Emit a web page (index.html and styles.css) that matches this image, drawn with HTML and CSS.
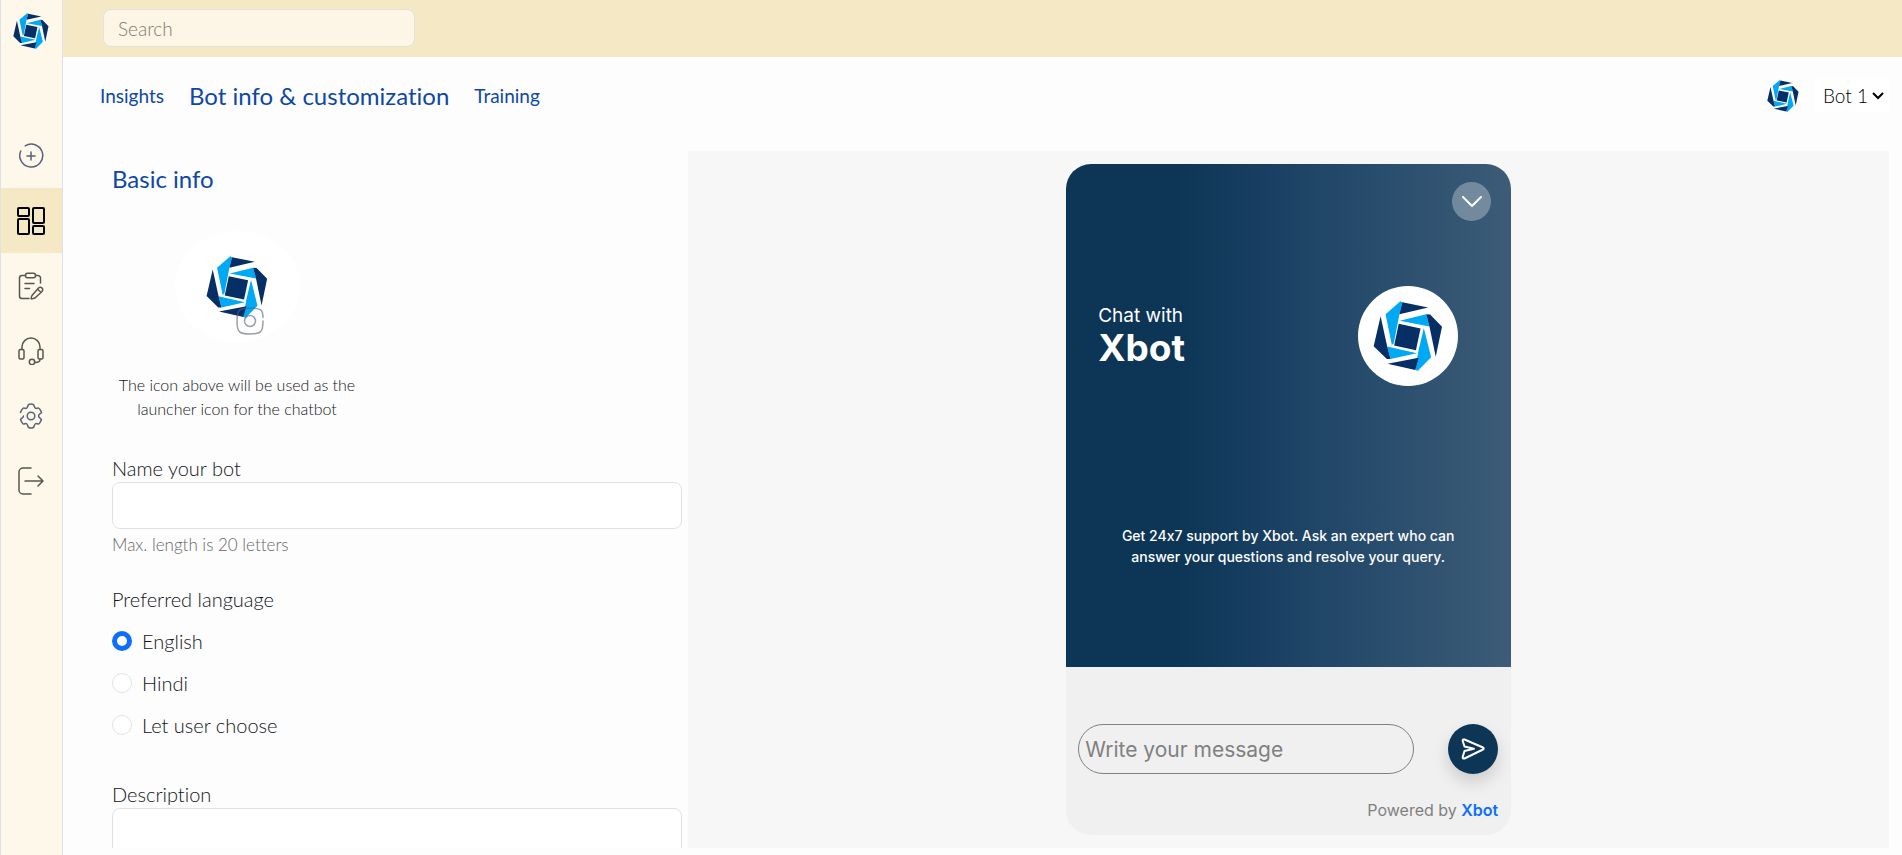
FILE: index.html
```html
<!DOCTYPE html>
<html lang="en">
<head>
    <meta charset="UTF-8">
    <meta name="viewport" content="width=device-width, initial-scale=1.0">
    <title>Bot info & customization</title>
    <link rel="stylesheet" href="styles.css">
</head>
<body>
    <!-- shared logo -->
    <svg class="defs" width="0" height="0" aria-hidden="true">
        <symbol id="logo" viewBox="68 62 210 212">
            <g fill="#00a9f4">
                <path d="M150 63l6 3-9 36-17 88-6 5-19-93z"/>
                <path d="M148 122l80-20 10 37z"/>
                <path d="M221 144l22 88-40 41-8-2 10-60z"/>
                <path d="M110 200l90 20-80 18z"/>
            </g>
            <g fill="#062f66">
                <path d="M156 66l78 16-87 20z"/>
                <path d="M228 102l12 1 36 37-19 91-19-92z"/>
                <path d="M205 234l-10 37-84-19z"/>
                <path d="M90 108l20 92 10 38-11 0-40-39z"/>
                <path d="M145 131l66 14-14 66-66-14z"/>
            </g>
        </symbol>
    </svg>

    <div class="app">
        <nav class="sidebar" aria-label="Main">
            <a class="brand" href="#" aria-label="Home"><svg><use href="#logo"/></svg></a>
            <ul class="menu">
                <li><a href="#" aria-label="New bot">
                    <svg class="blue" viewBox="0 0 28 28"><path d="M8.200 3.800A11.500 11.500 0 1 1 3.700 9M14 10v8M10 14h8"/></svg>
                </a></li>
                <li><a href="#" class="active" aria-label="Dashboard">
                    <svg viewBox="0 0 28 28"><rect x="1" y="1" width="11" height="8" rx="1"/><rect x="1" y="12" width="11" height="15" rx="1"/><rect x="16" y="1" width="11" height="15" rx="1"/><rect x="16" y="19" width="11" height="8" rx="1"/></svg>
                </a></li>
                <li><a href="#" aria-label="Forms">
                    <svg viewBox="0 0 28 28"><path d="M8.500 3.500H5a2.500 2.500 0 0 0-2.500 2.500v18A2.500 2.500 0 0 0 5 26.500h7M18.500 3.500h2.500a2.500 2.500 0 0 1 2.500 2.500v5M8 11.500h9M8 16.500h4.500M15 23.500l6.500-7.500q2-1.500 3.500 0t0 3.500l-7 6.500q-4 1.500-3.800.500 0-1.500.800-3zM20.500 17.300l3.500 3"/><rect x="8.500" y="1.300" width="10" height="4.500" rx="2"/></svg>
                </a></li>
                <li><a href="#" aria-label="Support">
                    <svg viewBox="0 0 28 28"><path d="M5 12.500V10a9 9 0 0 1 18 0v2.500M23 22.500c0 2.300-2 3-5 3"/><rect x="2" y="12.500" width="5" height="9.500" rx="1.500"/><rect x="21" y="12.500" width="5" height="9.500" rx="1.500"/><circle cx="15" cy="25" r="2.700"/></svg>
                </a></li>
                <li><a href="#" aria-label="Settings">
                    <svg class="blue" viewBox="0 0 28 28"><path d="M3.500 10.500c1-2.500 2.500-5 3.500-4.500 2.500 1 3 .500 4-2.500.300-1.500 1-1.500 3-1.500s2.700 0 3 1.500c1 3 1.500 3.500 4 2.500 1-.500 2.500 2 3.500 4.500 0 .700-3 1.700-3 3.500s3 2.800 3 3.500c-1 2.500-2.500 5-3.500 4.500-2.500-1-3-.500-4 2.500-.300 1.500-1 1.500-3 1.500s-2.700 0-3-1.500c-1-3-1.500-3.500-4-2.500-1 .500-2.500-2-3.500-4.500 0-.700 3-1.700 3-3.500"/><circle cx="14" cy="14" r="3.800"/></svg>
                </a></li>
                <li><a href="#" aria-label="Log out">
                    <svg viewBox="0 0 28 28"><path d="M14 1H6a4 4 0 0 0-4 4v18a4 4 0 0 0 4 4h8M8 14h18M21 9l5 5-5 5"/></svg>
                </a></li>
            </ul>
        </nav>

        <div class="main">
            <header class="topbar">
                <input class="search" type="search" placeholder="Search" aria-label="Search">
            </header>

            <div class="tabs-row">
                <nav class="tabs" aria-label="Bot sections">
                    <a href="#">Insights</a>
                    <a href="#" class="current">Bot info &amp; customization</a>
                    <a href="#">Training</a>
                </nav>
                <div class="bot-picker">
                    <svg class="picker-logo"><use href="#logo"/></svg>
                    <div class="picker-select">
                        <select aria-label="Bot">
                            <option>Bot 1</option>
                        </select>
                        <svg class="arrow" viewBox="0 0 12 8"><path d="M1 1l5 5 5-5"/></svg>
                    </div>
                </div>
            </div>

            <div class="content">
                <form class="bot-form">
                    <h2>Basic info</h2>
                    <div class="icon-block">
                        <div class="bot-icon">
                            <svg class="bot-logo"><use href="#logo"/></svg>
                            <button class="camera" type="button" aria-label="Change icon">
                                <svg viewBox="0 0 28 28"><path d="M27 10.500C27 3 25 1 14 1S1 3 1 14s2 13 13 13 13-2 13-13"/><circle cx="14" cy="14" r="5.500"/></svg>
                            </button>
                        </div>
                        <p>The icon above will be used as the launcher icon for the chatbot</p>
                    </div>

                    <div class="field">
                        <label for="bot-name">Name your bot</label>
                        <input type="text" id="bot-name" maxlength="20">
                        <small>Max. length is 20 letters</small>
                    </div>

                    <fieldset class="languages">
                        <legend>Preferred language</legend>
                        <label><input type="radio" name="lang" checked>English</label>
                        <label><input type="radio" name="lang">Hindi</label>
                        <label><input type="radio" name="lang">Let user choose</label>
                    </fieldset>

                    <div class="field">
                        <label for="description">Description</label>
                        <textarea id="description"></textarea>
                    </div>
                </form>

                <section class="preview" aria-label="Preview">
                    <div class="chat">
                        <div class="chat-top">
                            <button class="collapse" type="button" aria-label="Collapse">
                                <svg viewBox="0 0 20 12"><path d="M1 1l9 9 9-9"/></svg>
                            </button>
                            <div class="chat-title">
                                <p>Chat with<strong>Xbot</strong></p>
                                <div class="chat-logo"><svg><use href="#logo"/></svg></div>
                            </div>
                            <p class="chat-text">Get 24x7 support by Xbot. Ask an expert who can answer your questions and resolve your query.</p>
                        </div>
                        <div class="chat-bottom">
                            <div class="message-row">
                                <input type="text" placeholder="Write your message" aria-label="Message">
                                <button class="send" type="button" aria-label="Send">
                                    <svg viewBox="0 0 24 22"><path d="M3.500 1.500L22 9.500q1.500 1 0 2L3.500 20.500q-2 .500-1.800-1.500L3.500 13l9.500-2.300L3.500 8.500 1.700 3q-.200-2 1.800-1.500z"/></svg>
                                </button>
                            </div>
                            <p class="powered">Powered by <a href="#">Xbot</a></p>
                        </div>
                    </div>
                </section>
            </div>
        </div>
    </div>
</body>
</html>
```
FILE: styles.css
```css
* {
    box-sizing: border-box;
}

body {
    margin: 0;
    font-family: Lato, sans-serif;
    font-size: 20px;
    font-weight: 300;
    font-variant-ligatures: none;
    color: #111518;
    background-color: #fdfdfd;
}

p, h2, ul {
    margin: 0;
    padding: 0;
}

a {
    text-decoration: none;
}

button {
    border: none;
    padding: 0;
    cursor: pointer;
}

input, select, textarea {
    font: inherit;
    color: inherit;
}

.defs {
    position: absolute;
}

.app {
    display: flex;
    height: 100vh;
    overflow: hidden;
}

/* sidebar */
.sidebar {
    width: 63px;
    flex-shrink: 0;
    background-color: #fdf8ea;
    border-left: 1px solid #dee2e6;
    border-right: 1px solid #dee2e6;
}

.brand {
    display: flex;
    justify-content: center;
    height: 123px;
    padding: 13px 2px 0 0;
}

.brand svg {
    width: 36px;
    height: 36px;
}

.menu {
    list-style: none;
}

.menu a {
    display: flex;
    align-items: center;
    justify-content: center;
    height: 65px;
    padding-right: 1px;
}

.menu a.active {
    background-color: #f5e8c5;
}

.menu svg {
    width: 28px;
    height: 28px;
    fill: none;
    stroke: #57564f;
    stroke-width: 1.5;
    stroke-linecap: round;
    stroke-linejoin: round;
}

.menu svg.blue {
    stroke: #59617b;
}

.menu .active svg {
    stroke: #000;
    stroke-width: 2;
}

/* top part */
.main {
    flex: 1;
    min-width: 0;
    display: flex;
    flex-direction: column;
}

.topbar {
    flex-shrink: 0;
    height: 57px;
    padding: 9px 40px;
    background-color: #f5e8c5;
}

.search {
    display: block;
    width: 312px;
    height: 38px;
    padding: 0 14px;
    border: 1px solid #e3e1da;
    border-radius: 8px;
    background-color: #fdf5e6;
    font-size: 19px;
}

.search::placeholder {
    color: #7e7d70;
    opacity: 1;
}

.tabs-row {
    display: flex;
    flex-shrink: 0;
    justify-content: space-between;
    align-items: center;
    height: 77px;
    margin-bottom: 17px;
    padding: 0 13px 0 37px;
}

.tabs {
    display: flex;
    align-items: center;
    gap: 25px;
}

.tabs a {
    color: #0d47a9;
    font-size: 19px;
    font-weight: 400;
}

.tabs a.current {
    font-size: 24px;
}

.bot-picker {
    display: flex;
    align-items: center;
    gap: 16px;
}

.picker-logo {
    width: 32px;
    height: 32px;
}

.picker-select {
    position: relative;
}

.picker-select select {
    appearance: none;
    display: block;
    width: 74px;
    height: 33px;
    padding: 0 8px;
    border: none;
    background-color: #fff;
    color: #000;
    font-size: 19px;
}

.picker-select .arrow {
    position: absolute;
    top: 13px;
    right: 5px;
    width: 12px;
    height: 8px;
    fill: none;
    stroke: #000;
    stroke-width: 2;
    pointer-events: none;
}

/* form */
.content {
    flex: 1;
    min-height: 0;
    display: grid;
    grid-template-columns: 1fr 2fr;
    margin: 0 13px 7px 25px;
}

.bot-form {
    padding: 12px 6px 0 24px;
    overflow-y: auto;
    scrollbar-width: none;
}

.bot-form h2 {
    color: #0d47a9;
    font-size: 24px;
    font-weight: 400;
    line-height: 32px;
}

.icon-block {
    width: 250px;
    margin: 36px 0 33px;
    text-align: center;
    font-size: 16px;
    line-height: 24px;
}

.bot-icon {
    position: relative;
    display: flex;
    align-items: center;
    justify-content: center;
    width: 125px;
    height: 111px;
    margin: 0 auto 31px;
    border-radius: 50%;
    background-color: #fff;
}

.bot-logo {
    width: 62px;
    height: 62px;
}

.camera {
    position: absolute;
    left: 61px;
    bottom: 7px;
    width: 28px;
    height: 28px;
    background: none;
}

.camera svg {
    display: block;
    fill: none;
    stroke: #59617b;
    stroke-width: 1.5;
    stroke-linecap: round;
    opacity: 0.6;
}

.field label {
    display: block;
    line-height: 28px;
}

.field input, .field textarea {
    display: block;
    width: 100%;
    height: 47px;
    padding: 6px 12px;
    border: 1px solid #dee2e6;
    border-radius: 8px;
    background-color: #fff;
}

.field textarea {
    height: 100px;
    resize: none;
}

.field small {
    display: block;
    font-size: 17px;
    line-height: 32px;
    color: #66686b;
}

.languages {
    margin: 0 0 34px;
    padding: 0;
    border: none;
}

.languages legend {
    padding: 24px 0 7px;
    line-height: 28px;
}

.languages label {
    display: flex;
    align-items: center;
    gap: 10px;
    height: 42px;
}

.languages input {
    appearance: none;
    width: 20px;
    height: 20px;
    margin: 0;
    border: 1px solid #dee2e6;
    border-radius: 50%;
    background-color: #fff;
}

.languages input:checked {
    border: 5px solid #0d6efd;
}

/* chat preview */
.preview {
    display: flex;
    justify-content: center;
    padding: 13px 0;
    background-color: #f7f7f7;
}

.chat {
    display: flex;
    flex-direction: column;
    width: 445px;
    border-radius: 25px;
    overflow: hidden;
    background-color: #f0f0f0;
    font-family: Inter, sans-serif;
    font-weight: 400;
    font-feature-settings: "calt" 0;
}

.chat-top {
    flex: 1;
    display: flex;
    flex-direction: column;
    padding: 18px 20px 0 32px;
    background: linear-gradient(90deg, #0c3556 25%, #204668 57%, #3c5c77);
    color: #fff;
}

.collapse {
    display: flex;
    align-items: center;
    justify-content: center;
    align-self: flex-end;
    width: 39px;
    height: 39px;
    border-radius: 50%;
    background-color: rgba(255, 255, 255, 0.3);
}

.collapse svg {
    width: 20px;
    height: 12px;
    fill: none;
    stroke: #fff;
    stroke-width: 2;
    stroke-linecap: round;
    stroke-linejoin: round;
}

.chat-title {
    display: flex;
    align-items: center;
    justify-content: space-between;
    margin: 65px 33px 0 0;
    font-size: 19px;
    line-height: 24px;
}

.chat-title strong {
    display: block;
    font-size: 37px;
    font-weight: 700;
    line-height: 40px;
}

.chat-logo {
    display: flex;
    align-items: center;
    justify-content: center;
    width: 100px;
    height: 100px;
    border-radius: 50%;
    background-color: #fff;
}

.chat-logo svg {
    width: 70px;
    height: 70px;
}

.chat-text {
    width: 360px;
    margin: 139px auto 0 0;
    padding-left: 20px;
    font-size: 14px;
    font-weight: 500;
    line-height: 21px;
    text-align: center;
}

.chat-bottom {
    padding: 57px 13px 13px 12px;
}

.message-row {
    display: flex;
    justify-content: space-between;
}

.message-row input {
    width: 336px;
    height: 50px;
    padding: 0 6px;
    border: 1px solid #808080;
    border-radius: 25px;
    background: none;
    font-size: 21px;
}

.message-row input::placeholder {
    color: #808080;
    opacity: 1;
}

.send {
    display: flex;
    align-items: center;
    justify-content: center;
    width: 50px;
    height: 50px;
    border-radius: 50%;
    background-color: #0c3556;
    box-shadow: 0 8px 16px rgba(0, 0, 0, 0.15);
}

.send svg {
    width: 24px;
    height: 22px;
    fill: none;
    stroke: #fff;
    stroke-width: 2;
    stroke-linejoin: round;
}

.powered {
    margin-top: 24px;
    font-size: 16px;
    line-height: 24px;
    text-align: right;
    color: #808080;
}

.powered a {
    color: #0d6efd;
    font-weight: 600;
}
```
